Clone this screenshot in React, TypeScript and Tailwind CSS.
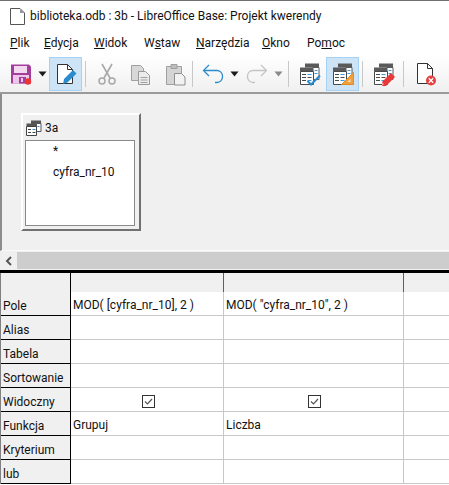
import type { ReactNode } from "react";

const rows = ["Pole", "Alias", "Tabela", "Sortowanie", "Widoczny", "Funkcja", "Kryterium", "lub"];

const col1: Record<string, string> = { Pole: "MOD( [cyfra_nr_10], 2 )", Funkcja: "Grupuj" };
const col2: Record<string, string> = { Pole: 'MOD( "cyfra_nr_10", 2 )', Funkcja: "Liczba" };

function Sep({ className }: { className: string }) {
  return <div className={`w-px h-[26px] bg-[#c8c8c8] shrink-0 ${className}`} />;
}

function Caret({ className, dim }: { className: string; dim?: boolean }) {
  return (
    <svg width="9" height="6" viewBox="0 0 9 6" className={`shrink-0 mt-px ${className}`}>
      <path d="M0.5 0.5h8L4.5 5.5z" fill={dim ? "#8a8a8a" : "#1c1c1c"} />
    </svg>
  );
}

function Icon({ className, children }: { className: string; children: ReactNode }) {
  return (
    <svg width="24" height="24" viewBox="0 0 24 24" fill="none" className={`shrink-0 ${className}`}>
      {children}
    </svg>
  );
}

function QueryBase() {
  return (
    <>
      <path d="M7 1.5h14v4H7z" fill="#5a5a5a" />
      <path d="M2 5.5h13v4H2z" fill="#5a5a5a" />
      <path d="M15 5.5h6v12h-6z" fill="#fff" stroke="#5a5a5a" />
      <path d="M2.5 9.5h13v13h-13z" fill="#fff" stroke="#4a4a4a" />
      <path d="M4 12.5h4M4 15.5h4M4 18.5h4M9.5 15.5h4" stroke="#4a4a4a" />
      <path d="M9.5 12.5h4M9.5 18.5h4M16.5 8.5h3M16.5 11.5h3" stroke="#3a9bdc" />
    </>
  );
}

function Cell({ label, center, width, grow }: { label?: string; center?: boolean; width?: string; grow?: boolean }) {
  return (
    <div className={`h-full border-r border-[#c8c8c8] flex items-center pl-[2px] pt-[2px] ${width ?? ""} ${grow ? "flex-1 border-r-0" : ""} ${center ? "justify-center pl-0 pt-0" : ""}`}>
      {center ? (
        <svg width="13" height="13" viewBox="0 0 13 13" fill="none" className="mt-[1px]">
          <rect x="0.5" y="0.5" width="12" height="12" fill="#fff" stroke="#333" />
          <path d="M3 6.5l2.5 2.5L10 4" stroke="#555" strokeWidth="1.2" />
        </svg>
      ) : (
        label
      )}
    </div>
  );
}

export default function App() {
  return (
    <div className="w-[449px] h-[485px] overflow-hidden bg-white flex flex-col text-[12px] text-[#111] font-['Roboto','Noto_Sans',sans-serif] leading-none">
      <div className="h-px bg-[#707070]" />
      {/* title */}
      <div className="h-[30px] flex items-center pl-[10px]">
        <svg width="15" height="17" viewBox="0 0 15 17" fill="none" className="mt-px">
          <path d="M0.5 0.5h9.5l4.5 4.5v11.5h-14z" fill="#fff" stroke="#555" />
          <path d="M10 0.5v4.5h4.5z" fill="#999" />
        </svg>
        <span className="ml-[5px]">biblioteka.odb : 3b - LibreOffice Base: Projekt kwerendy</span>
      </div>
      {/* menu */}
      <div className="h-[24px] flex items-center pl-[10px]">
        <span className="w-[34px]"><u>P</u>lik</span>
        <span className="w-[50px]"><u>E</u>dycja</span>
        <span className="w-[50px]"><u>W</u>idok</span>
        <span className="w-[52px]">W<u>s</u>taw</span>
        <span className="w-[66px]"><u>N</u>arzędzia</span>
        <span className="w-[45px]"><u>O</u>kno</span>
        <span>Po<u>m</u>oc</span>
      </div>
      {/* toolbar */}
      <div className="h-[37px] flex items-center bg-gradient-to-b from-white to-[#f0f0f0] border-b-2 border-[#9a9a9a] box-content">
        <Icon className="ml-[9px]">
          <path d="M2 2.5h18l2 2v17H2z" fill="#a33e9c" />
          <path d="M5 4h13v7H5z" fill="#f3d9f0" />
          <path d="M4 13h16v8.5H4z" fill="#eec6ea" />
          <path d="M10 15h7v6.5h-7z" fill="#a33e9c" />
          <path d="M12 16h2v4h-2z" fill="#eec6ea" />
          <circle cx="19" cy="19.5" r="3.2" fill="#ee3333" />
        </Icon>
        <Caret className="ml-[5px]" />
        <div className="ml-[2px] w-[33px] h-[34px] bg-[#cde4f7] border border-[#a6d2f5] flex items-center justify-center">
          <svg width="24" height="24" viewBox="0 0 24 24" fill="none">
            <path d="M3.5 2.5h10l5 5v14h-15z" fill="#fff" stroke="#333" />
            <path d="M13.5 2.5v5h5" stroke="#333" />
            <path d="M9 22l1-5 9-9 3.5 3.5-9 9z" fill="#2a8ccf" />
          </svg>
        </div>
        <Sep className="ml-[3px]" />
        <Icon className="ml-[9px]">
          <path d="M7 2l8 14M17 2L9 16" stroke="#a8a8a8" strokeWidth="1.6" />
          <circle cx="7" cy="19" r="3" stroke="#a8a8a8" strokeWidth="1.5" />
          <circle cx="17" cy="19" r="3" stroke="#a8a8a8" strokeWidth="1.5" />
        </Icon>
        <Icon className="ml-[9px]">
          <path d="M3.5 3.5h9l3 3v12h-12z" fill="#d8d8d8" stroke="#a0a0a0" />
          <path d="M10.5 9.5h7l4 4v9h-11z" fill="#ececec" stroke="#9a9a9a" />
          <path d="M12.5 15.5h7M12.5 18h7M12.5 20.5h7" stroke="#a0a0a0" />
        </Icon>
        <Icon className="ml-[11px]">
          <path d="M3.5 4.5h15v18h-15z" fill="#d4d4d4" stroke="#a0a0a0" />
          <path d="M8 2.5h6v4H8z" fill="#bcbcbc" stroke="#a0a0a0" />
          <path d="M11.5 11.5h7l3.5 3.5v8h-10.500z" fill="#f2f2f2" stroke="#8f8f8f" />
        </Icon>
        <Sep className="ml-[5px]" />
        <Icon className="ml-[8px]">
          <path d="M8 3L2.500 8.500 8 14" stroke="#2a8ccf" strokeWidth="1.3" />
          <path d="M3 8.500h13a5.500 5.500 0 0 1 5.500 5.500v1a5.500 5.500 0 0 1-5.500 5.500h-2" stroke="#2a8ccf" strokeWidth="1.3" />
        </Icon>
        <Caret className="ml-[5px]" />
        <Icon className="ml-[6px]">
          <path d="M16 3l5.500 5.500L16 14" stroke="#c4c4c4" strokeWidth="1.3" />
          <path d="M21 8.500H8a5.500 5.500 0 0 0-5.500 5.500v1A5.500 5.500 0 0 0 8 20.500h2" stroke="#c4c4c4" strokeWidth="1.3" />
        </Icon>
        <Caret className="ml-[5px]" dim />
        <Sep className="ml-[5px]" />
        <Icon className="ml-[9px]">
          <QueryBase />
          <path d="M9.500 19l3.500 3.500 9-9" stroke="#2a8ccf" strokeWidth="2" />
        </Icon>
        <div className="ml-[4px] w-[33px] h-[34px] bg-[#cde4f7] border border-[#a6d2f5] flex items-center justify-center">
          <svg width="24" height="24" viewBox="0 0 24 24" fill="none">
            <QueryBase />
            <path d="M22.500 10.500v12h-12z" fill="#f0a040" stroke="#e08a20" />
            <path d="M19.500 17v3h-3z" fill="#fbe3c2" />
          </svg>
        </div>
        <Sep className="ml-[3px]" />
        <Icon className="ml-[9px]">
          <QueryBase />
          <path d="M10 20l9-9 4 4-9 9h-4z" fill="#e83a3a" />
          <path d="M10 20l2 2-2 2z" fill="#f6a0a0" />
        </Icon>
        <Sep className="ml-[7px]" />
        <Icon className="ml-[9px]">
          <path d="M4.500 1.500h10l5 5v15h-15z" fill="#fff" stroke="#333" />
          <path d="M14.500 1.500v5h5" stroke="#333" />
          <circle cx="18" cy="18.500" r="5" fill="#e84040" />
          <path d="M15.800 16.300l4.400 4.400M20.200 16.300l-4.400 4.400" stroke="#fff" strokeWidth="1.300" />
        </Icon>
      </div>
      {/* design area */}
      <div className="h-[157px] bg-[#f0f0f0] border-l-2 border-[#8c8c8c] border-b border-b-[#fafafa] pt-[19px] pl-[19px]">
        <div className="w-[120px] h-[118px] border-t-2 border-l-2 border-white border-r-2 border-r-[#707070] border-b-2 border-b-[#707070] flex flex-col pl-[2px] pr-[2px]">
          <div className="h-[25px] flex items-center shrink-0">
            <svg width="16" height="16" viewBox="0 0 16 16" fill="none" className="ml-[1px]">
              <path d="M5 0.500h10v3H5zM0.500 3.500h10v3H0.500z" fill="#555" />
              <path d="M10.500 3.500h4.500v8h-4.500z" fill="#fff" stroke="#555" />
              <path d="M0.500 6.500h10v9h-10z" fill="#fff" stroke="#444" />
              <path d="M2 9.500h3M2 12.500h3M6.500 12.500h3" stroke="#444" />
              <path d="M6.500 9.500h3M11.500 6.500h2" stroke="#2a8ccf" />
            </svg>
            <span className="ml-[3px]">3a</span>
          </div>
          <div className="w-[110px] h-[86px] bg-white border border-[#8a8a8e] pl-[27px] pt-[3px] flex flex-col">
            <span className="h-[14px] leading-[14px]">*</span>
            <span className="mt-[7px] leading-[14px]">cyfra_nr_10</span>
          </div>
        </div>
      </div>
      {/* scrollbar */}
      <div className="h-[1px] bg-[#f0f0f0]" />
      <div className="h-[17px] flex bg-[#cdcdcd]">
        <div className="w-[17px] bg-[#f0f0f0] flex items-center justify-center">
          <svg width="8" height="10" viewBox="0 0 8 10" fill="none">
            <path d="M6 1L2 5l4 4" stroke="#555" strokeWidth="2" />
          </svg>
        </div>
      </div>
      <div className="h-[1px] bg-[#f0f0f0]" />
      <div className="h-[3px] bg-black" />
      {/* grid */}
      <div className="border-l border-[#808080]">
        <div className="h-[19px] flex bg-[#f0f0f0]">
          <div className="w-[70px] border-r border-black" />
          <div className="w-[153px] border-r border-[#606060]" />
          <div className="w-[180px] border-r border-[#606060]" />
        </div>
        {rows.map((row) => (
          <div key={row} className="h-[24px] flex">
            <div className="w-[70px] h-full bg-[#f0f0f0] border-r border-b border-black flex items-end pl-[2px] pb-[3px]">
              {row}
            </div>
            <div className="flex flex-1 h-full border-b border-[#c8c8c8]">
              <Cell width="w-[153px]" label={col1[row]} center={row === "Widoczny"} />
              <Cell width="w-[180px]" label={col2[row]} center={row === "Widoczny"} />
              <Cell grow />
            </div>
          </div>
        ))}
      </div>
    </div>
  );
}
